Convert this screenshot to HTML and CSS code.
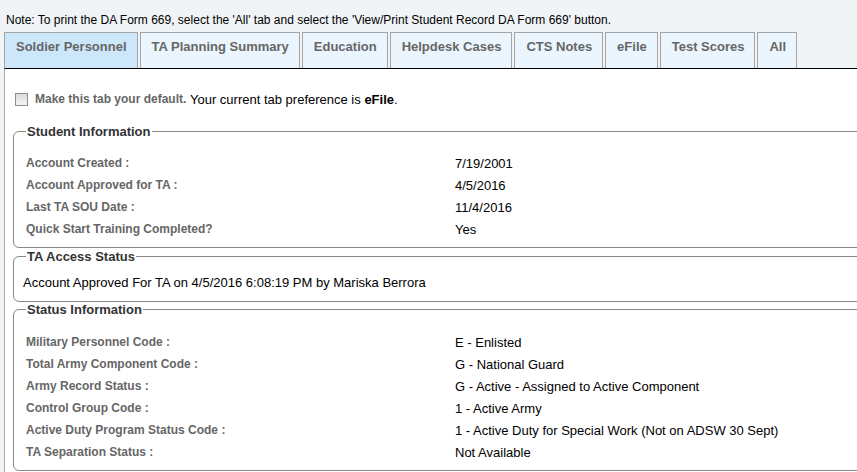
FILE: index.html
```html
<!DOCTYPE html>
<html>
<head>
<meta charset="utf-8">
<link rel="stylesheet" href="styles.css">
</head>
<body>
<div class="note">Note: To print the DA Form 669, select the 'All' tab and select the 'View/Print Student Record DA Form 669' button.</div>
<div class="tabs">
  <div class="tab active">Soldier Personnel</div>
  <div class="tab">TA Planning Summary</div>
  <div class="tab">Education</div>
  <div class="tab">Helpdesk Cases</div>
  <div class="tab">CTS Notes</div>
  <div class="tab">eFile</div>
  <div class="tab">Test Scores</div>
  <div class="tab">All</div>
</div>
<div class="panel">
  <div class="default-row">
    <span class="checkbox"></span>
    <span class="muted-bold">Make this tab your default.</span>&nbsp;Your current tab preference is&nbsp;<b>eFile</b>.
  </div>
  <fieldset class="box">
    <legend>Student Information</legend>
    <div class="grid">
      <div class="label">Account Created :</div><div class="value">7/19/2001</div>
      <div class="label">Account Approved for TA :</div><div class="value">4/5/2016</div>
      <div class="label">Last TA SOU Date :</div><div class="value">11/4/2016</div>
      <div class="label">Quick Start Training Completed?</div><div class="value">Yes</div>
    </div>
  </fieldset>
  <fieldset class="box">
    <legend>TA Access Status</legend>
    <div class="status-text">Account Approved For TA on 4/5/2016 6:08:19 PM by Mariska Berrora</div>
  </fieldset>
  <fieldset class="box">
    <legend>Status Information</legend>
    <div class="grid">
      <div class="label">Military Personnel Code :</div><div class="value">E - Enlisted</div>
      <div class="label">Total Army Component Code :</div><div class="value">G - National Guard</div>
      <div class="label">Army Record Status :</div><div class="value">G - Active - Assigned to Active Component</div>
      <div class="label">Control Group Code :</div><div class="value">1 - Active Army</div>
      <div class="label">Active Duty Program Status Code :</div><div class="value">1 - Active Duty for Special Work (Not on ADSW 30 Sept)</div>
      <div class="label">TA Separation Status :</div><div class="value">Not Available</div>
    </div>
  </fieldset>
</div>
</body>
</html>
```
FILE: styles.css
```css
html, body {
  margin: 0;
  padding: 0;
  overflow: hidden;
}
body {
  background: #f0f4f7;
  font-family: "Liberation Sans", Arial, sans-serif;
  font-size: 12px;
  color: #000;
  width: 857px;
  height: 472px;
}
.note {
  padding: 13px 0 0 6px;
  height: 19px;
  line-height: 15px;
  font-size: 12px;
}
.tabs {
  display: flex;
  gap: 2px;
  padding-left: 4px;
  align-items: flex-end;
}
.tab {
  height: 35px;
  line-height: 28px;
  border: 1px solid #a5a5a5;
  border-bottom: none;
  background: #eaf5fd;
  color: #666;
  font-weight: bold;
  font-size: 13px;
  padding: 0 10px 0 11px;
}
.tab.active {
  background: #cde7fa;
}
.panel {
  margin-left: 4px;
  width: 853px;
  background: #fff;
  border-left: 1px solid #aaa;
  border-top: 1px solid #000;
  padding: 22px 0 0 8px;
  height: 404px;
  box-sizing: border-box;
  overflow: hidden;
}
.default-row {
  display: flex;
  align-items: center;
  font-size: 13px;
  padding-left: 2px;
  height: 16px;
}
.checkbox {
  width: 11px;
  height: 11px;
  border: 1px solid #8f8f8f;
  background: linear-gradient(#dcdcdc, #f4f4f4);
  margin-right: 7px;
}
.muted-bold {
  font-weight: bold;
  color: #666;
  font-size: 12px;
}
.box {
  border: 1px solid #888;
  border-radius: 6px;
  margin: 17px -40px 0 0;
  padding: 0 12px 7px 12px;
}
.box + .box {
  margin-top: 1px;
}
.box:last-child {
  margin-top: 0;
}
legend {
  padding: 0 1px;
  font-weight: bold;
  font-size: 13px;
  color: #333;
  line-height: 15px;
}
.grid {
  display: grid;
  grid-template-columns: 429px 1fr;
  grid-auto-rows: 22px;
  align-items: center;
  margin-top: 13px;
}
.box:last-child .grid {
  margin-top: 14px;
}
.label {
  font-weight: bold;
  color: #666;
  font-size: 12px;
}
.value {
  font-size: 13px;
}
.status-text {
  margin: 8px 0 0 -3px;
  line-height: 22px;
  font-size: 13px;
}
```
